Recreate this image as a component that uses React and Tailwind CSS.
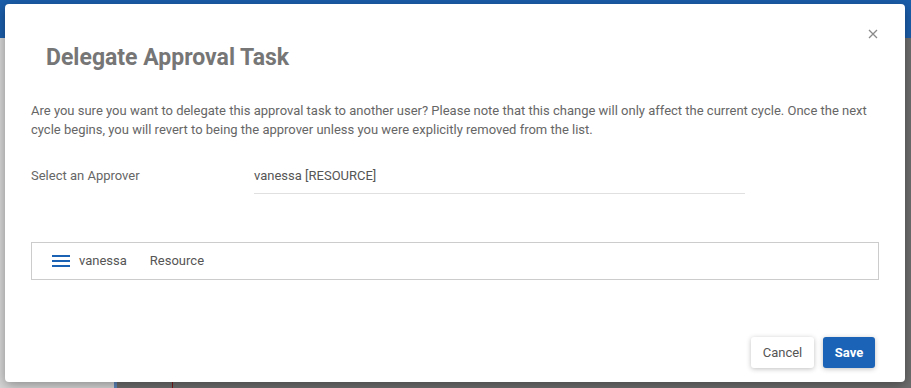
import React from "react";

const Backdrop = () => (
  <div className="flex h-[388px] w-[911px] flex-col">
    <div className="h-[38px] bg-[#1b5eab]" />
    <div className="flex flex-1">
      <div className="w-[114px] bg-[#d6d6d6]" />
      <div className="w-[3px] bg-[#5f87bd]" />
      <div className="flex flex-1 bg-[#6e6e6e]">
        <div className="ml-[55px] w-px bg-[#7a1a1a]" />
      </div>
    </div>
  </div>
);

const MenuIcon = () => (
  <svg width="18" height="12" viewBox="0 0 18 12" className="block">
    <rect x="0" y="0" width="18" height="2" fill="#1b62b5" />
    <rect x="0" y="5" width="18" height="2" fill="#1b62b5" />
    <rect x="0" y="10" width="18" height="2" fill="#1b62b5" />
  </svg>
);

const App = () => {
  return (
    <div
      className="relative h-[388px] w-[911px] overflow-hidden"
      style={{ fontFamily: "Roboto, 'Liberation Sans', sans-serif" }}
    >
      <Backdrop />
      <div className="absolute left-[5px] top-[4px] flex h-[378px] w-[900px] flex-col rounded-[4px] bg-white px-[26px] shadow-[0_3px_12px_rgba(0,0,0,0.35)]">
        <button className="absolute right-[27px] top-[25px] flex h-[10px] w-[10px] items-center justify-center">
          <svg width="10" height="10" viewBox="0 0 10 10">
            <path d="M1 1 L9 9 M9 1 L1 9" stroke="#8a8a8a" strokeWidth="1.3" />
          </svg>
        </button>

        <h2 className="ml-[15px] mt-[41px] text-[23px] font-bold leading-[26px] text-[#767676]">
          Delegate Approval Task
        </h2>

        <p className="mt-[30px] text-[13px] leading-[19px] text-[#666]">
          Are you sure you want to delegate this approval task to another user? Please note that this change will only affect the current cycle. Once the next cycle begins, you will revert to being the approver unless you were explicitly removed from the list.
        </p>

        <div className="mt-[27px] flex text-[13px] leading-[19px]">
          <div className="w-[223px] text-[#666]">Select an Approver</div>
          <div className="w-[491px] border-b border-[#e0e0e0] pb-[8px] text-[#555]">
            vanessa [RESOURCE]
          </div>
        </div>

        <div className="mt-[48px] flex h-[38px] items-center border border-[#cccccc] pl-[20px] text-[13px] text-[#555]">
          <MenuIcon />
          <span className="ml-[9px]">vanessa</span>
          <span className="ml-[23px]">Resource</span>
        </div>

        <div className="mt-[57px] flex justify-end gap-[9px] pr-[4px]">
          <button className="h-[31px] w-[63px] rounded-[3px] bg-white text-[13px] text-[#555] shadow-[0_1px_5px_rgba(0,0,0,0.25)]">
            Cancel
          </button>
          <button className="h-[31px] w-[52px] rounded-[3px] bg-[#1b63b6] text-[13px] font-bold text-white shadow-[0_1px_5px_rgba(0,0,0,0.25)]">
            Save
          </button>
        </div>
      </div>
    </div>
  );
};

export default App;
